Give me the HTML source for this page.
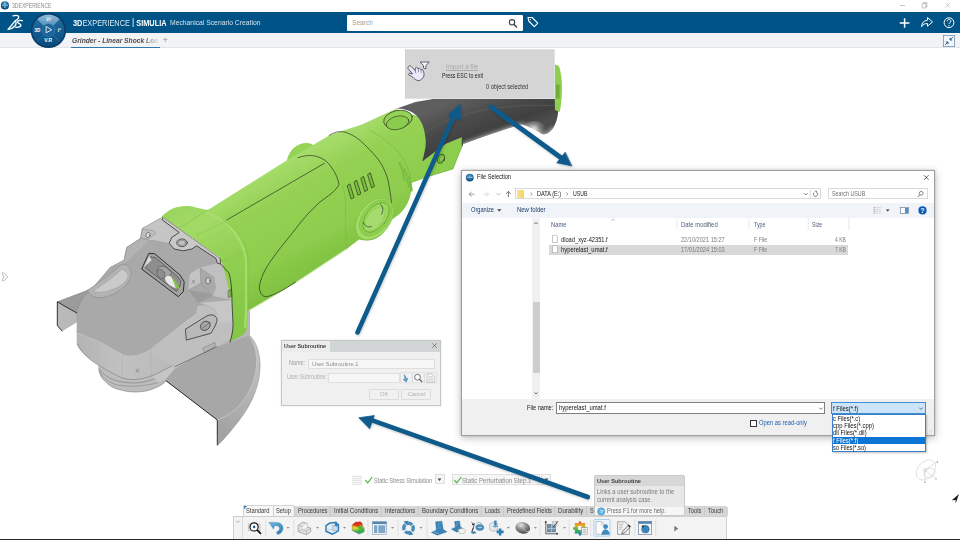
<!DOCTYPE html>
<html lang="en"><head>
<meta charset="utf-8">
<title>3DEXPERIENCE</title>
<style>
html,body{margin:0;padding:0;}
body{width:960px;height:540px;overflow:hidden;background:#fff;position:relative;font-family:"Liberation Sans","DejaVu Sans",sans-serif;color:#333;}
.abs{position:absolute;}
.t{position:absolute;white-space:nowrap;line-height:1;}
#titlebar{left:0;top:0;width:960px;height:11.500px;background:#fff;}
#bluebar{left:0;top:11.500px;width:960px;height:21.200px;background:#005386;}
#tabbar{left:0;top:32.700px;width:960px;height:15.600px;background:#f1f3f6;border-bottom:1px solid #e2e4e8;box-sizing:border-box;}
#bottomline{left:0;top:538.600px;width:960px;height:1.400px;background:#2a2a2a;}
</style>
</head>
<body>
<!-- window title bar -->
<div id="titlebar" class="abs"></div>
<div class="t" style="left: 11.6px; top: 3px; font-size: 6.5px; color: rgb(138, 138, 138); transform: scaleX(0.7866); transform-origin: 0px 0px;">3DEXPERIENCE</div>
<!-- blue bar -->
<div id="bluebar" class="abs"></div>
<div id="tabbar" class="abs"></div>

<!-- window icon -->
<svg class="abs" style="left:0;top:0" width="12" height="12" viewBox="0 0 12 12">
  <defs><radialGradient id="wi" cx="50%" cy="30%" r="65%"><stop offset="0" stop-color="#6fb1dc"></stop><stop offset="0.55" stop-color="#1f6ca3"></stop><stop offset="1" stop-color="#0a4372"></stop></radialGradient></defs>
  <circle cx="4.900" cy="5.400" r="4.100" fill="url(#wi)"></circle>
  <path d="M2.300 5.400h1.100M4.300 5.400h1.300M6.500 5.400h1.100M4.900 3.600v.8M4.900 6.400v1.600" stroke="#e8f3fb" stroke-width="0.800"></path>
</svg>
<!-- window controls -->
<svg class="abs" style="left:890px;top:0" width="70" height="12" viewBox="0 0 70 12">
  <path d="M10 5.5h5" stroke="#b5b5b5" stroke-width="0.8" fill="none"></path>
  <path d="M32.3 3.6h3.6v4.4h-3.6zM33.3 3.6v-1h3.6v4.4h-1" stroke="#aaa" stroke-width="0.7" fill="none"></path>
  <path d="M55.5 3l4.4 4.6M59.9 3l-4.4 4.6" stroke="#b5b5b5" stroke-width="0.7" fill="none"></path>
</svg>
<!-- DS logo -->
<svg class="abs" style="left:6px;top:13px" width="20" height="19" viewBox="0 0 20 19">
  <g fill="none" stroke="#fff" stroke-linecap="round" stroke-linejoin="round">
    <path d="M7 2.800C9.500 2.200 12 2.400 12.600 3.500C13.200 4.900 11.500 6.500 9.300 7.700" stroke-width="1.300"></path>
    <path d="M9.300 7.700L2 16.500C7 16 12 12 9.300 7.700Z" stroke-width="1.200" fill="#fff" fill-opacity="0.150"></path>
    <path d="M16.300 7.700C13.800 7 11.600 7.600 11.300 8.800C11 10.300 14.900 10.500 14.900 12.200C14.900 13.700 12.200 14.600 9.900 14.300" stroke-width="1.400"></path>
  </g>
</svg>
<!-- compass -->
<svg class="abs" style="left:29px;top:11px" width="40" height="40" viewBox="0 0 40 40">
  <defs>
    <linearGradient id="cg" x1="0" y1="0" x2="0" y2="1"><stop offset="0" stop-color="#2470a5"></stop><stop offset="0.55" stop-color="#125c91"></stop><stop offset="1" stop-color="#0a4b7c"></stop></linearGradient>
    <linearGradient id="cg2" x1="0" y1="0" x2="0" y2="1"><stop offset="0" stop-color="#8fbad8"></stop><stop offset="1" stop-color="#3f82b3"></stop></linearGradient>
  </defs>
  <circle cx="19.400" cy="19.400" r="17.700" fill="#083e69"></circle>
  <circle cx="19.400" cy="19.400" r="15.900" fill="url(#cg)"></circle>
  <path d="M19.400 19.400L8.300 8.300A15.700 15.700 0 0 1 30.500 8.300Z" fill="url(#cg2)"></path>
  <path d="M8.300 8.300L30.500 30.500M30.500 8.300L8.300 30.500" stroke="#5b93bb" stroke-width="0.500" opacity="0.750"></path>
  <circle cx="19.400" cy="19.200" r="6.500" fill="#1a6498" stroke="#4787b5" stroke-width="0.500"></circle>
  <path d="M17.100 15.400v6.400l5.600-3z" fill="none" stroke="#f0f6fb" stroke-width="0.900" stroke-linejoin="round"></path>
  <text x="19.600" y="10.400" font-size="4.800" font-weight="bold" fill="#f2f7fb" text-anchor="middle" font-family="Liberation Sans, sans-serif" font-style="italic">Vr</text>
  <text x="8.500" y="20.800" font-size="4.900" font-weight="bold" fill="#fff" text-anchor="middle" font-family="Liberation Sans, sans-serif" textLength="5.800" lengthAdjust="spacingAndGlyphs">3D</text>
  <text x="30.400" y="20.800" font-size="5.200" font-weight="bold" fill="#fff" text-anchor="middle" font-family="Liberation Sans, sans-serif">i²</text>
  <text x="19.200" y="31" font-size="5.300" font-weight="bold" fill="#fff" text-anchor="middle" font-family="Liberation Sans, sans-serif" textLength="7.800" lengthAdjust="spacingAndGlyphs">V.R</text>
</svg>
<div class="t" style="left: 72.5px; top: 17.6px; font-size: 8.3px; color: rgb(255, 255, 255); transform: scaleX(0.888); transform-origin: 0px 0px;"><b>3D</b><span style="color:#dbe8f2">EXPERIENCE</span> <span style="font-size:9.500px;position:relative;top:-0.300px;">|</span> <b>SIMULIA</b></div>
<div class="t" style="left: 169.5px; top: 19.2px; font-size: 7.2px; color: rgb(213, 228, 239); transform: scaleX(0.9438); transform-origin: 0px 0px;">Mechanical Scenario Creation</div>
<!-- tab -->
<div class="abs" style="left:72px;top:35px;width:87px;height:11px;overflow:hidden;-webkit-mask-image:linear-gradient(90deg,#000 82%,transparent 100%);mask-image:linear-gradient(90deg,#000 82%,transparent 100%);"><div class="t" style="left: 0px; top: 1.6px; font-size: 7.5px; font-weight: bold; font-style: italic; color: rgb(77, 77, 77); transform: scaleX(0.8932); transform-origin: 0px 0px;">Grinder - Linear Shock Loa</div></div>
<div class="abs" style="left:71px;top:46.500px;width:89px;height:1.600px;background:#2a78ad;"></div>
<div class="t" style="left:162.500px;top:35px;font-size:9.500px;color:#9a9a9a;">+</div>
<!-- search -->
<div class="abs" style="left:347px;top:15px;width:175.500px;height:15.500px;background:#fff;border-radius:1px;"></div>
<div class="t" style="left:352px;top:19.600px;font-size:6.600px;color:#a2a2a2;">Search</div>
<svg class="abs" style="left:507px;top:17px" width="12" height="12" viewBox="0 0 12 12"><circle cx="5" cy="5.300" r="2.700" fill="none" stroke="#444" stroke-width="1.100"></circle><path d="M7 7.400l2.600 2.700" stroke="#444" stroke-width="1.400" stroke-linecap="round"></path></svg>
<svg class="abs" style="left:526px;top:15px" width="14" height="14" viewBox="0 0 14 14"><path d="M2 2.500h4.200l5.600 5.600l-3.500 3.600l-5.600-5.700z" fill="none" stroke="#fff" stroke-width="1.100" stroke-linejoin="round"></path><circle cx="4.300" cy="4.600" r="0.700" fill="#fff"></circle></svg>
<!-- right icons -->
<svg class="abs" style="left:896px;top:14px" width="64" height="18" viewBox="0 0 64 18">
  <path d="M8.600 4.200v9.600M3.800 9h9.600" stroke="#fff" stroke-width="1.500" fill="none"></path>
  <path d="M31.500 3.600l5 4.300l-5 4.300v-2.600c-3-.2-4.700.8-5.900 3.100c.2-3.900 2.300-6.200 5.900-6.500z" fill="none" stroke="#fff" stroke-width="1" stroke-linejoin="round"></path>
  <circle cx="53" cy="8.700" r="4.900" fill="none" stroke="#fff" stroke-width="1"></circle>
  <path d="M51.200 7.300c0-1.100.8-1.800 1.800-1.800s1.800.7 1.800 1.600c0 1.400-1.800 1.400-1.800 2.900" fill="none" stroke="#fff" stroke-width="1"></path>
  <circle cx="53" cy="11.600" r="0.650" fill="#fff"></circle>
</svg>
<svg class="abs" style="left:943px;top:35px" width="12" height="12" viewBox="0 0 12 12">
  <rect x="0.350" y="0.350" width="11.300" height="11.300" fill="#f4f6f9" stroke="#5b86a8" stroke-width="0.700"></rect>
  <path d="M9.800 2.200L7 5M7 2.800v2.200h2.200M2.200 9.800L5 7M5 9.200V7H2.800" stroke="#1f5f8f" stroke-width="1" fill="none"></path>
</svg>
<!--TOPBAR-->
<!--GRINDER_START--><svg class="abs" style="left:0;top:0" width="960" height="540" viewBox="0 0 960 540">
<defs>
  <linearGradient id="gBody" gradientUnits="userSpaceOnUse" x1="270" y1="150" x2="330" y2="262">
    <stop offset="0" stop-color="#97d258"></stop><stop offset="0.14" stop-color="#a6dc6b"></stop><stop offset="0.36" stop-color="#95d254"></stop><stop offset="0.78" stop-color="#8dcc4c"></stop><stop offset="1" stop-color="#80c241"></stop>
  </linearGradient>
  <linearGradient id="gCollar" gradientUnits="userSpaceOnUse" x1="185" y1="205" x2="245" y2="330">
    <stop offset="0" stop-color="#9cd65e"></stop><stop offset="0.18" stop-color="#a3da67"></stop><stop offset="0.5" stop-color="#91cf50"></stop><stop offset="1" stop-color="#84c645"></stop>
  </linearGradient>
  <linearGradient id="gGrip" gradientUnits="userSpaceOnUse" x1="470" y1="95" x2="488" y2="142">
    <stop offset="0" stop-color="#5e5e5e"></stop><stop offset="0.450" stop-color="#4a4a4a"></stop><stop offset="0.800" stop-color="#404040"></stop><stop offset="1" stop-color="#4c4c4c"></stop>
  </linearGradient>
  <linearGradient id="gRim" gradientUnits="userSpaceOnUse" x1="215" y1="430" x2="262" y2="350">
    <stop offset="0" stop-color="#a2a2a2"></stop><stop offset="0.5" stop-color="#b4b4b4"></stop><stop offset="1" stop-color="#c2c2c2"></stop>
  </linearGradient>
  <linearGradient id="gSide" gradientUnits="userSpaceOnUse" x1="78" y1="350" x2="200" y2="350">
    <stop offset="0" stop-color="#b4b4b4"></stop><stop offset="0.35" stop-color="#c1c1c1"></stop><stop offset="1" stop-color="#b6b6b6"></stop>
  </linearGradient>
  <radialGradient id="gGlow" gradientUnits="userSpaceOnUse" cx="534" cy="129" r="13"><stop offset="0" stop-color="#fff" stop-opacity="0.850"></stop><stop offset="0.450" stop-color="#cfcfcf" stop-opacity="0.400"></stop><stop offset="1" stop-color="#888" stop-opacity="0"></stop></radialGradient>
  <clipPath id="gripClip"><path d="M395.500 109L415.500 102L433 99L460 96L560 96L559.700 99L558 113C557.500 118 556 124 552.600 129C549 133.500 545 135 542 134C537 131 533 128 529 127C526 125.500 523 124.500 520 124.500L506.300 129L484 136.500L463.300 144L462 137.200L445.600 143.900L439.600 148.300L421.900 161.700C423 158 424 156 424 154C425.500 149 426 144 425.600 139.400C425 132 423.500 126 421 121.700C418 116 413 112 408 110.500C404 109 400 108.500 395.500 109Z"></path></clipPath>
  <filter id="blur2" x="-10%" y="-50%" width="120%" height="200%"><feGaussianBlur stdDeviation="2.200"></feGaussianBlur></filter>
</defs>
<g stroke-linejoin="round" stroke-linecap="round">
<!-- guard: left plate -->
<path d="M57.300 301.800L91 289L110 300L77 322L62 331L57.300 325.500Z" fill="#9b9b9b"></path>
<path d="M57.300 301.800L76.700 313L76.700 322L62 331L57.300 325.500Z" fill="#b9b9b9"></path>
<path d="M57.300 301.800L91 289" fill="none" stroke="#777" stroke-width="0.500"></path>
<path d="M76.700 313L57.300 301.800V325.500L62 331" fill="none" stroke="#111" stroke-width="0.800"></path>
<!-- guard: right fan rim -->
<path d="M246.700 333C254 338 259 348 260 362C261 384 252 404 238 422C231 431 224 439 218 445L217.300 420Z" fill="url(#gRim)"></path>
<path d="M217.300 420V445" fill="none" stroke="#111" stroke-width="0.900"></path>
<path d="M218 445C224 439 231 431 238 422C252 404 261 384 260 362C259 348 254 338 246.700 333" fill="none" stroke="#8a8a8a" stroke-width="0.500"></path>
<!-- guard: flat face -->
<path d="M164.400 379.500L175 366L200 352L216.700 345L246.700 332C252 338 256 347 256.700 360C257 380 248 397 236 409C230 414 223 418 217.300 420Z" fill="#a7a7a7"></path>
<path d="M164.400 379.500L217.300 420" fill="none" stroke="#111" stroke-width="0.900"></path>
<path d="M217.300 420C223 418 230 414 236 409C248 397 257 380 256.700 360C256 347 252 338 246.700 333" fill="none" stroke="#c9c9c9" stroke-width="0.800"></path>
<!-- spindle flange -->
<path d="M98 362L98.700 370C100 376 103 380 105 381C109 386 115 389 121 390C126 391.500 131 392 136 392C143 392 150 390.500 155 388C160 386 164 383.500 166 381L166 362Z" fill="#bdbdbd"></path>
<path d="M98.700 368C103 375 110 379 117.500 381C123 382.500 130 383 136 383C144 382.500 151 380.500 157.500 377.500C165 374 171 370 176 366" fill="none" stroke="#6a6a6a" stroke-width="0.500"></path>
<path d="M100 372.500C104 379 110 383 117.500 385C123 386 130 386.500 137.500 386C147 385.500 157 383.500 165 380" fill="none" stroke="#7a7a7a" stroke-width="0.500"></path>
<path d="M98.700 370C100 376 103 380 105 381C109 386 115 389 121 390C126 391.500 131 392 136 392C143 392 150 390.500 155 388C160 386 164 383.500 166 381" fill="none" stroke="#6e6e6e" stroke-width="0.500"></path>
<!-- lower band between side face and guard -->
<path d="M150 372L177.800 360L216.700 342L250 331L250 335L216.700 346.700L200 354L175 368.500L165 380L158 383Z" fill="#c6c6c6"></path>
<!-- gear body side face (front rounded) -->
<path d="M76.700 322V344.400C80 351 88 359 99 365.500C108 371 115 375 122 377.800C128 380 134 380 140 379C146 378 151 376 155.500 374.400L177.800 363L216.700 346.700L250 335L250 300L200 300Z" fill="url(#gSide)"></path>
<path d="M77.800 344.400C80 351 88 359 99 365.500C108 371 115 375 122 377.800C128 380 134 380 140 379C146 378 151 376 155.500 374.400L177.800 363L200 351" fill="none" stroke="#6f6f6f" stroke-width="0.500"></path>
<path d="M97.800 341V364.500M122 354.400V377.500M151 349V376" fill="none" stroke="#a9a9a9" stroke-width="0.400"></path>
<!-- flange side region (light) -->
<path d="M190 274L200 266.700L220.800 264L230 275L233 300L233.300 321.700L230.800 338.300L216.700 346.700L175 366.700L150 352L175 330L196 314L198 303Z" fill="#bfbfbf"></path>
<!-- gear body top face -->
<path d="M90 291C84 295 79 302 77.800 309L76.700 333C82 335 90 338 97.800 341L122 354.400C128 357.500 138 357 150 350L175 330L196 314L198 303L180 298L141 269L126 262L110 267.500Z" fill="#a9a9a9"></path>
<path d="M76.700 333C82 335 90 338 97.800 341L122 354.400C128 357.500 138 357 150 350L175 330L196 314" fill="none" stroke="#c8c8c8" stroke-width="0.800"></path>
<!-- base silhouette of upper head -->
<path d="M160.800 218L142.500 228.300L140.800 238.300L126.700 247.500L124.200 260L110 267.500L139 272L178 301L197 306L233 302L230 275L220.800 264L220 258.300Z" fill="#a9a9a9"></path>
<!-- top strip light -->
<path d="M160.800 218L142.500 228.300L140.800 238.300L148.300 240L154 240L169.200 243.300L171.700 237.500L179.200 232.500L162.500 220Z" fill="#c5c5c5"></path>
<!-- wall front face -->
<path d="M140.800 238.300L126.700 247.500L124.200 260L110 267.500L126.500 262L146.700 242.500L148.300 240Z" fill="#b3b3b3"></path>
<path d="M142.500 228.300L140.800 238.300L126.700 247.500L124.200 260" fill="none" stroke="#9a9a9a" stroke-width="0.500"></path>
<path d="M140.800 238.300L148.300 240" fill="none" stroke="#9a9a9a" stroke-width="0.400"></path>
<path d="M160.800 218L142.500 228.300L140.800 238.300L126.700 247.500L124.200 260L110 267.500L90 291C84 295 79 302 77.800 309" fill="none" stroke="#858585" stroke-width="0.500"></path>
<!-- flange right of cube -->
<path d="M200 267.500L217.500 263.300L220.800 264L230 275L233 300L213 296L215.800 288.300L214 276.700Z" fill="#c0c0c0"></path>
<!-- dished pocket -->
<path d="M87.800 290C96 284.500 110 275 121 264.500C127 263 132 268 131 275.500C129 286 116 295 103 297.500C96 298.500 88.500 296 87.800 290Z" fill="#b3b3b3" stroke="#8a8a8a" stroke-width="0.600"></path>
<path d="M93 291C102 285.500 113 277.500 122 269C126 271 128.500 274 127.800 277.800C125 284 118 288 111 290C106 292 101 292.500 97.800 292C95 292 93.500 291.500 93 291Z" fill="#cacaca" stroke="#929292" stroke-width="0.400"></path>
<!-- window slot -->
<path d="M148.700 253.700L141.700 269L178.300 296.700L183.300 291.700L184.200 281.700L180 275L155 254Z" fill="#a2a2a2" stroke="#111" stroke-width="0.800"></path>
<path d="M150.500 257L145.500 268L176.500 291.500L180 286L181 281L177 276L156 258Z" fill="#8e8e8e" stroke="#333" stroke-width="0.500"></path>
<path d="M149 256L144 267.500L151.700 260Z" fill="#dcdcdc"></path>
<path d="M157 270C158 266 163 265 167 268L172 273L165 280Z" fill="#a3a3a3" stroke="#444" stroke-width="0.500"></path>
<ellipse cx="161" cy="274" rx="3.600" ry="5" fill="#8f8f8f" stroke="#444" stroke-width="0.400" transform="rotate(-30 161 274)"></ellipse>
<path d="M165 279C166 275 170 275 172 278L176 288C171 287 166 283 165 279Z" fill="#e8e8e8"></path>
<path d="M172 277C175 280 178 284 179.500 289L176 288C175 284 173 280 172 277Z" fill="#7fc93f"></path>
<!-- small ear -->
<path d="M142.500 229L154 230.800L155.800 233.300L148.300 239.500L141 238Z" fill="#bdbdbd" stroke="#777" stroke-width="0.400"></path>
<ellipse cx="148" cy="235" rx="1.900" ry="2.700" fill="#dedede" stroke="#333" stroke-width="0.500" transform="rotate(20 148 235)"></ellipse>
<!-- cube boss -->
<path d="M190 274L200 267.500L214 276.700L215.800 288.300L210 293.300L200.800 283.300L188.300 290Z" fill="#b6b6b6"></path>
<path d="M190 274L200 267.500L200.800 283.300L188.300 290Z" fill="#c4c4c4"></path>
<path d="M200 267.500L214 276.700L215.800 288.300L210 293.300L200.800 283.300Z" fill="#a9a9a9"></path>
<path d="M200 267.500L200.800 283.300L188.300 290M200.800 283.300L210 293.300" fill="none" stroke="#909090" stroke-width="0.500"></path>
<path d="M188.300 290L198 303L213 296L210 293.300" fill="#9c9c9c"></path>
<ellipse cx="208" cy="280.800" rx="2.200" ry="3.200" fill="#d4d4d4" stroke="#222" stroke-width="0.500"></ellipse>
<path d="M192 280l3 3.400M195 280l-3 3.400" stroke="#444" stroke-width="0.400" fill="none"></path>
<path d="M198 303C206 304 213 307 216.700 313L217.500 323L233.300 321.700L233 300Z" fill="#c6c6c6"></path>
<path d="M198 303C206 304 213 307 216.700 313" fill="none" stroke="#a0a0a0" stroke-width="0.400"></path>
<!-- lever ear -->
<path d="M185.800 329L206.700 316C210 314.500 213 314.500 215 316C217 317.500 217.500 320 216.700 321.700C215.500 326 213 330 210.800 333.300L186.700 340Z" fill="#b9b9b9" stroke="#222" stroke-width="0.700"></path>
<ellipse cx="205.300" cy="325.800" rx="5.300" ry="4.200" fill="#a6a6a6" stroke="#222" stroke-width="0.600" transform="rotate(-35 205.300 325.800)"></ellipse>
<path d="M202.500 328L208.500 323.500" stroke="#444" stroke-width="0.500"></path>
<path d="M203 348L215 342.500L215 347L205 353Z" fill="#b2b2b2" stroke="#666" stroke-width="0.400"></path>
<path d="M175 366.700L216.700 346.700" fill="none" stroke="#333" stroke-width="0.500"></path>
<path d="M136 369l3 3.400M139 369l-3 3.400" stroke="#444" stroke-width="0.400" fill="none"></path>
<!-- far side boss bump on body -->
<path d="M287 160C289 150 297 143 307 143C312 143 315 146 315 150L300 166Z" fill="#94d354"></path>
<!-- green main body -->
<path d="M207.800 210L291 157.800L331 134.400L362 124.400L395.500 109L424 118L430 150L421 162L427.800 176.700L411 183C412.500 194 408.500 206 399 214.400L392.600 219L384 232C378 240 368 242 359 239.600L346.700 249L293 284.400L262 303L247.800 311L232 300Z" fill="url(#gBody)"></path>
<!-- rear tab -->
<path d="M421 162L436 147L445.600 143.900L462 137.200L462.600 145.400L458.900 154L453 169L427.800 176.700L411 183Z" fill="#8dcd4d"></path>
<path d="M462.600 145.400L458.900 154L453 169L427.800 176.700" fill="none" stroke="#5c9d2b" stroke-width="0.500"></path>
<path d="M462.300 137.200V145.400" stroke="#222" stroke-width="1"></path>
<ellipse cx="441" cy="158.700" rx="3.400" ry="4.800" fill="#86c746" stroke="#1a1a1a" stroke-width="0.600" transform="rotate(25 441 158.700)"></ellipse>
<ellipse cx="441.800" cy="158.300" rx="2.200" ry="3.600" fill="none" stroke="#3a6e18" stroke-width="0.400" transform="rotate(25 441.800 158.300)"></ellipse>
<!-- green collar -->
<path d="M161 217.300C166 212 172 208 177.800 207C185 205.500 192 206 196.700 207.800L207.800 210L223 220C232 226 238 232 241 238C245 245 247 251 247.800 257.800V311L246.700 329C245 333 243 335 241 336L230 342C232 336 233 330 233 324.400L232 302C232 290 231 280 229 273L221 262L219 256.700Z" fill="url(#gCollar)"></path>
<path d="M220.800 264L229 273C231 280 232 290 232 302L233 324.400C233 330 232 336 230 342" fill="none" stroke="#1d1d1d" stroke-width="0.700"></path>
<path d="M206 212.500C216 216 224 220 231 228C239 237 245 248 246.200 262V311L245.200 327" fill="none" stroke="#a9de71" stroke-width="2.600" opacity="0.850"></path>
<path d="M196.700 235L225 221.700M220.800 261.700L245.800 251.700M232.500 301L246.500 294" fill="none" stroke="#7fc043" stroke-width="0.400"></path>
<path d="M248.500 310.500L293 284L346.700 248.600" fill="none" stroke="#b9e388" stroke-width="0.900"></path>

<path d="M177.800 229L207.800 210M223 220C232 226 238 232 241 238C245 245 247 251 247.800 257.800V311" fill="none" stroke="#7bbb3c" stroke-width="0.500"></path>

<path d="M228.500 290.500l2.500 -1v7l-2.500 1z" fill="#7ec23f" stroke="#222" stroke-width="0.400"></path>
<!-- lug plate -->
<path d="M163.300 217.500L220 258.300L220.800 264L217.500 263.300L215.800 258.300L196.700 245.800L191.700 249L183.300 250.800L174.200 249L169.200 243.300L171.700 237.500L179.200 232.500L162.500 220Z" fill="#c9c9c9" stroke="#1a1a1a" stroke-width="0.700"></path>
<path d="M163.300 217.500L220 258.300" fill="none" stroke="#e2e2e2" stroke-width="0.600"></path>
<ellipse cx="182" cy="242.800" rx="5.300" ry="3.900" fill="#b3b3b3" stroke="#1a1a1a" stroke-width="0.600"></ellipse>
<ellipse cx="182" cy="242.800" rx="3.600" ry="2.600" fill="#c2c2c2" stroke="#555" stroke-width="0.400"></ellipse>
<!-- body seams -->
<path d="M226.700 220L324.400 163.300" fill="none" stroke="#1a1a1a" stroke-width="0.600"></path>
<path d="M297.800 157.800C305 155 312 155 317.800 156.700C324 159 328 162 331 166.700C335 172 338 178 339 184.400C336 191 328 196 320 202C311 210 303 219 295.500 229C287 240 279 249 273 257.800C267 266 263 273 261 280C259 286 259 289 260 291C261 295 264 297 266.700 296.700C275 295 285 289 295.500 282" fill="none" stroke="#1a1a1a" stroke-width="0.600"></path>
<path d="M329 135.500C334 132 339 131 344.400 132C352 134 359 139 364.400 144.400C371 151 376 156 380 162C385 170 388 178 389 185.500C391 196 392 206 392 215" fill="none" stroke="#1a1a1a" stroke-width="0.600"></path>
<path d="M343 186.700C345 194 346 202 345.500 209C345 222 346 236 346.700 249" fill="none" stroke="#76b83a" stroke-width="0.500"></path>
<path d="M369 130C380 135 390 143 398 152C405 160 409 169 411 179" fill="none" stroke="#6fb234" stroke-width="0.500"></path>
<!-- vents -->
<g fill="#79bd3d" stroke="#1a1a1a" stroke-width="0.600">
<path d="M347.500 185.500l2.400 -1.600l4.200 13.500l-2.600 1.400z"></path><path d="M354.300 181.800l2.400 -1.600l4.200 13.500l-2.600 1.400z"></path><path d="M361.100 178.100l2.400 -1.600l4.200 13.500l-2.600 1.400z"></path><path d="M367.900 174.400l2.400 -1.600l4.200 13.500l-2.600 1.400z"></path>
</g>
<g fill="none" stroke="#6fb135" stroke-width="2" stroke-linecap="round">
<path d="M399.500 163C402.500 168 404 174 404.500 180"></path><path d="M404.500 169.500C407 174 408.500 180 408.800 186"></path><path d="M408.600 177.500C410.500 181.500 411.500 186 411.600 190.500"></path>
</g>
<g fill="none" stroke="#8fd050" stroke-width="0.800" stroke-linecap="round">
<path d="M399.900 163.500C402.900 168.500 404.400 174.500 404.900 180"></path><path d="M404.900 170C407.400 174.500 408.900 180.500 409.200 186"></path><path d="M409 178C410.900 182 411.900 186.500 412 190.500"></path>
</g>
<!-- side boss ring -->
<ellipse cx="374.500" cy="219" rx="15.500" ry="23.500" fill="#a3db6a" stroke="#7fc040" stroke-width="0.600" transform="rotate(38 374.500 219)"></ellipse>
<ellipse cx="375.600" cy="218" rx="13" ry="20.500" fill="#8fcf4f" stroke="#79bb3b" stroke-width="0.500" transform="rotate(38 375.600 218)"></ellipse>
<ellipse cx="376" cy="217.500" rx="10" ry="17" fill="#9bd65d" stroke="#4f8e23" stroke-width="0.500" transform="rotate(38 376 217.500)"></ellipse>
<ellipse cx="374.800" cy="219" rx="7.500" ry="14" fill="#a6dc6f" stroke="#86c648" stroke-width="0.500" transform="rotate(38 374.800 219)"></ellipse>
<path d="M380.500 204.500C383.500 207 383.500 211 381.500 214.500" fill="none" stroke="#1a1a1a" stroke-width="0.600"></path>
<path d="M363.500 222.500C365 226.500 368 228 371.500 226.500" fill="none" stroke="#1a1a1a" stroke-width="0.600"></path>
<!-- top hole near grip -->
<ellipse cx="398" cy="119.500" rx="14.500" ry="9" fill="#95d356" stroke="#1a1a1a" stroke-width="0.600" transform="rotate(-12 398 119.500)"></ellipse>
<ellipse cx="397.600" cy="122.800" rx="11.500" ry="6.600" fill="#8ccc4c" stroke="#1a1a1a" stroke-width="0.500" transform="rotate(-14 397.600 122.800)"></ellipse>
<!-- dark grip -->
<path d="M395.500 109L415.500 102L433 99L460 96L560 96L559.700 99L558 113C557.500 118 556 124 552.600 129C549 133.500 545 135 542 134C537 131 533 128 529 127C526 125.500 523 124.500 520 124.500L506.300 129L484 136.500L463.300 144L462 137.200L445.600 143.900L439.600 148.300L421.900 161.700C423 158 424 156 424 154C425.500 149 426 144 425.600 139.400C425 132 423.500 126 421 121.700C418 116 413 112 408 110.500C404 109 400 108.500 395.500 109Z" fill="url(#gGrip)"></path>
<path d="M424.400 134.400C430 128 445 120 470 113C500 106 530 104 557 106" fill="none" stroke="#686868" stroke-width="0.800" opacity="0.600"></path>
<g clip-path="url(#gripClip)"><path d="M463.300 145.500L484 138L506.300 130.500L520 126C526 126 533 130 542 136C546 136.500 550 134 553 130" fill="none" stroke="#fff" stroke-width="5" opacity="0.550" filter="url(#blur2)"></path><ellipse cx="534" cy="130" rx="13" ry="9" fill="url(#gGlow)"></ellipse></g>
<!-- green end cap -->
<path d="M554 64L559 66C561 72 562 80 562 88C562 98 561 106 559.700 112L555 110Z" fill="#8fce4e"></path>
<path d="M556 84l3.500 1v14l-3.500 -1z" fill="#6fae36"></path>
</g>
</svg>
<!--GRINDER_END-->
<!--CANVAS-->
<!-- left handle -->
<svg class="abs" style="left:1px;top:271px" width="9" height="12" viewBox="0 0 9 12"><path d="M1.200 2H3.200L6.800 6L3.200 9.800H1.200L2.600 6Z" fill="#fff" stroke="#a6a6a6" stroke-width="0.700" stroke-linejoin="round"></path></svg>
<!-- import panel -->
<div class="abs" style="left:405px;top:49px;width:149.500px;height:49.500px;background:#d5d5d5;box-sizing:border-box;border:1px solid #dfe3e6;border-left-color:#d0d0d0;"></div>
<svg class="abs" style="left:406px;top:59px" width="26" height="24" viewBox="0 0 26 24">
  <path d="M14.200 3h9l-3.300 3.600v3.200l-2.400 -.8v-2.400z" fill="#f6f6fc" stroke="#2a2a3a" stroke-width="0.700" stroke-linejoin="round"></path>
  <path d="M2.400 7.600c.7-1 2-.9 2.800-.1l4 4.100l.2-2.300c.1-1 1.400-1.400 2-.5l.8 1.200c.3-.8 1.400-1 2-.3l.8 1.100c.5-.6 1.500-.5 1.900.3c1.200 2.200 1.400 4.500.7 6.900l-3.600 3.600c-2.500.1-4.500-.6-5.900-2.100c-1.500-1.700-3.300-2.800-5.200-3.400c-.7-1 .1-2 1.200-1.800l2.500.7l-4.300-5.300c-.5-.7-.5-1.500.1-2.100z" fill="#ebe9fb" stroke="#2a2a3a" stroke-width="0.700" stroke-linejoin="round"></path>
  <path d="M9.200 11.600l.6 2.600M12.200 10l.5 3.200M15 10.800l.3 3" fill="none" stroke="#2a2a3a" stroke-width="0.500"></path>
</svg>
<div class="t" style="left: 445.8px; top: 64.3px; font-size: 6.6px; color: rgb(169, 169, 169); text-decoration: underline; transform: scaleX(0.9346); transform-origin: 0px 0px;">Import a file</div>
<div class="t" style="left: 441.7px; top: 72.8px; font-size: 6.3px; color: rgb(31, 31, 31); transform: scaleX(0.8309); transform-origin: 0px 0px;">Press ESC to exit</div>
<div class="t" style="left: 485.8px; top: 84.4px; font-size: 6.5px; color: rgb(51, 51, 51); transform: scaleX(0.8648); transform-origin: 0px 0px;">0 object selected</div>
<!-- user subroutine dialog -->
<div class="abs" style="left:281px;top:340px;width:160px;height:65.500px;background:#f0f0f0;box-sizing:border-box;border:1px solid #c6c6c6;box-shadow:0 0 2px rgba(0,0,0,0.120);"></div>
<div class="abs" style="left:282px;top:341px;width:158px;height:11px;background:#d2d5d6;"></div>
<div class="abs" style="left:282px;top:341px;width:47.500px;height:11px;background:#ececec;"></div>
<div class="t" style="left: 284px; top: 342.7px; font-size: 6.1px; color: rgb(63, 63, 63); font-weight: bold; transform: scaleX(0.886); transform-origin: 0px 0px;">User Subroutine</div>
<svg class="abs" style="left:431px;top:342px" width="8" height="8" viewBox="0 0 8 8"><path d="M1.300 1.300l4.600 4.600M5.900 1.300l-4.600 4.600" stroke="#707070" stroke-width="0.800"></path></svg>
<div class="t" style="left: 288.7px; top: 360.3px; font-size: 6.3px; color: rgb(160, 160, 160); transform: scaleX(0.8627); transform-origin: 0px 0px;">Name:</div>
<div class="abs" style="left:308.400px;top:358.500px;width:126.200px;height:10.500px;background:#f6f6f6;box-sizing:border-box;border:1px solid #dedede;border-radius:1px;"></div>
<div class="t" style="left: 311.6px; top: 360.9px; font-size: 6.2px; color: rgb(140, 140, 140); transform: scaleX(0.9323); transform-origin: 0px 0px;">User Subroutine.1</div>
<div class="t" style="left: 286.9px; top: 373.7px; font-size: 6.3px; color: rgb(176, 176, 176); transform: scaleX(0.8463); transform-origin: 0px 0px;">User Subroutine:</div>
<div class="abs" style="left:328.100px;top:372.700px;width:72px;height:10.500px;background:#f6f6f6;box-sizing:border-box;border:1px solid #dedede;border-radius:1px;"></div>
<svg class="abs" style="left:400px;top:372px" width="38" height="12" viewBox="0 0 38 12">
  <g fill="#f3f3f3" stroke="#d4d4d4" stroke-width="0.600"><rect x="0.500" y="0.900" width="11.500" height="10"></rect><rect x="12.600" y="0.900" width="11.500" height="10"></rect><rect x="24.800" y="0.900" width="11.500" height="10"></rect></g>
  <path d="M4 2.500c1.500 1 2.200 2.500 2.200 4.200l1.800-.6l-1.600 4l-3.400-2.400l1.700-.4c0-1.800-.3-3.300-.7-4.800z" fill="#5e9fc9" stroke="#3c7fae" stroke-width="0.400"></path>
  <circle cx="17.500" cy="5.200" r="2.900" fill="#fbfbfb" stroke="#555" stroke-width="0.800"></circle><path d="M19.600 7.400l2.600 2.600" stroke="#555" stroke-width="1.100"></path>
  <path d="M27 2h5l2.300 2.300v6h-7.300z" fill="#fafafa" stroke="#9a9a9a" stroke-width="0.500"></path><path d="M28.200 4.600h4.800M28.200 6h4.800M28.200 7.400h4.800M28.200 8.800h4.800" stroke="#b5b5b5" stroke-width="0.500"></path>
</svg>
<div class="abs" style="left:369.400px;top:388.500px;width:29.400px;height:11px;background:#f1f1f1;box-sizing:border-box;border:1px solid #dcdcdc;border-radius:1px;"></div>
<div class="t" style="left: 379.8px; top: 391px; font-size: 6.2px; color: rgb(176, 176, 176); transform: scaleX(0.9494); transform-origin: 0px 0px;">OK</div>
<div class="abs" style="left:401.200px;top:388.500px;width:30px;height:11px;background:#f1f1f1;box-sizing:border-box;border:1px solid #dcdcdc;border-radius:1px;"></div>
<div class="t" style="left: 407.5px; top: 391px; font-size: 6.2px; color: rgb(176, 176, 176); transform: scaleX(0.9084); transform-origin: 0px 0px;">Cancel</div>

<!--PANELS-->
<!-- file selection dialog -->
<div class="abs" style="left:461px;top:170px;width:473.500px;height:266px;background:#fff;box-sizing:border-box;border:1px solid #9f9f9f;box-shadow:0 2px 8px rgba(0,0,0,0.260), 0 0 2px rgba(0,0,0,0.180);"></div>
<svg class="abs" style="left:465px;top:173px" width="10" height="10" viewBox="0 0 10 10">
  <defs><radialGradient id="wi2" cx="50%" cy="35%" r="60%"><stop offset="0" stop-color="#5aa3d4"></stop><stop offset="1" stop-color="#0a4a7c"></stop></radialGradient></defs>
  <circle cx="4.800" cy="4.600" r="3.900" fill="url(#wi2)"></circle><path d="M2.200 4.300h1.200M4.200 4.300h1.300M6.300 4.300h1.200" stroke="#e6f2fb" stroke-width="0.900"></path>
</svg>
<div class="t" style="left: 476.7px; top: 174.4px; font-size: 6.6px; color: rgb(21, 21, 21); transform: scaleX(0.8587); transform-origin: 0px 0px;">File Selection</div>
<svg class="abs" style="left:922px;top:173px" width="9" height="9" viewBox="0 0 9 9"><path d="M2 2.200l4.600 4.600M6.600 2.200l-4.600 4.600" stroke="#222" stroke-width="0.700"></path></svg>
<!-- nav row -->
<svg class="abs" style="left:466px;top:188px" width="50" height="12" viewBox="0 0 50 12">
  <g fill="none" stroke-linecap="round" stroke-linejoin="round">
  <path d="M8.200 6.200H3.300M5.500 3.900L3.200 6.200L5.500 8.500" stroke="#8a8a8a" stroke-width="0.800"></path>
  <path d="M17.500 6.200H22.400M20.200 3.900L22.500 6.200L20.200 8.500" stroke="#d5d5d5" stroke-width="0.800"></path>
  <path d="M31 5.600l1.500 1.500l1.500-1.500" stroke="#9a9a9a" stroke-width="0.700"></path>
  <path d="M42.400 8.800V3.600M40.200 5.700L42.400 3.500L44.600 5.700" stroke="#555" stroke-width="0.800"></path>
  </g>
</svg>
<div class="abs" style="left:515.300px;top:188.300px;width:305.500px;height:11px;background:#fff;box-sizing:border-box;border:1px solid #d9d9d9;"></div>
<div class="abs" style="left:517px;top:189.600px;width:6.700px;height:8.400px;background:linear-gradient(90deg,#f9e08a,#f5d469);border-radius:0.500px;"></div>
<svg class="abs" style="left:528px;top:190px" width="46" height="8" viewBox="0 0 46 8"><path d="M2.600 2.300l1.600 1.700l-1.600 1.700M38.300 2.300l1.600 1.700l-1.600 1.700" fill="none" stroke="#666" stroke-width="0.600"></path></svg>
<div class="t" style="left: 536.7px; top: 190.6px; font-size: 6.3px; color: rgb(34, 34, 34); transform: scaleX(0.883); transform-origin: 0px 0px;">DATA (E:)</div>
<div class="t" style="left: 572.8px; top: 190.6px; font-size: 6.3px; color: rgb(34, 34, 34); transform: scaleX(0.8229); transform-origin: 0px 0px;">USUB</div>
<svg class="abs" style="left:801px;top:189px" width="20" height="10" viewBox="0 0 20 10">
  <path d="M3.200 4.200l1.700 1.700l1.700-1.700" fill="none" stroke="#555" stroke-width="0.800"></path>
  <path d="M9.400 0.500v9" stroke="#d9d9d9" stroke-width="0.800"></path>
  <path d="M13 3.600a2.200 2.200 0 1 0 3 0" fill="none" stroke="#555" stroke-width="0.700"></path><path d="M13.800 2.200h1.800v1.700" fill="none" stroke="#555" stroke-width="0.700"></path>
</svg>
<div class="abs" style="left:827.500px;top:188.300px;width:100px;height:11px;background:#fff;box-sizing:border-box;border:1px solid #d9d9d9;"></div>
<div class="t" style="left: 831.7px; top: 190.6px; font-size: 6.3px; color: rgb(111, 111, 111); transform: scaleX(0.8494); transform-origin: 0px 0px;">Search USUB</div>
<svg class="abs" style="left:916px;top:190px" width="9" height="9" viewBox="0 0 9 9"><circle cx="5.200" cy="3.300" r="1.900" fill="none" stroke="#555" stroke-width="0.700"></circle><path d="M3.800 4.800L1.800 6.900" stroke="#555" stroke-width="0.900"></path></svg>
<!-- toolbar row -->
<div class="abs" style="left:462px;top:203px;width:471.500px;height:14.700px;background:#f0f3f8;"></div>
<div class="t" style="left: 471.2px; top: 206.8px; font-size: 6.4px; color: rgb(28, 62, 108); transform: scaleX(0.8867); transform-origin: 0px 0px;">Organize</div>
<svg class="abs" style="left:496px;top:208px" width="7" height="5" viewBox="0 0 7 5"><path d="M1.200 1.200h4.200l-2.100 2.400z" fill="#333"></path></svg>
<div class="t" style="left: 517px; top: 206.8px; font-size: 6.4px; color: rgb(28, 62, 108); transform: scaleX(0.933); transform-origin: 0px 0px;">New folder</div>
<svg class="abs" style="left:870px;top:204px" width="62" height="13" viewBox="0 0 62 13">
  <path d="M3.600 3.600h1.600M3.600 5.400h1.600M3.600 7.200h1.600M3.600 9h1.600" stroke="#9a9a9a" stroke-width="0.900"></path>
  <path d="M6.600 3.600h1.400M9.200 3.600h1.400M6.600 5.400h1.400M9.200 5.400h1.400M6.600 7.200h1.400M9.200 7.200h1.400M6.600 9h1.400M9.200 9h1.400" stroke="#b5b5b5" stroke-width="0.700"></path>
  <path d="M15.800 5.400h3.800l-1.900 2.200z" fill="#333"></path>
  <rect x="30.300" y="3.600" width="8.200" height="5.800" fill="#fff" stroke="#6d7f96" stroke-width="0.700"></rect><rect x="35" y="4" width="3.200" height="5" fill="#4b8ed0"></rect>
  <circle cx="52.500" cy="6.400" r="4.100" fill="#0b5cb0"></circle>
  <text x="52.500" y="8.700" font-size="6.400" font-weight="bold" fill="#fff" text-anchor="middle" font-family="Liberation Sans, sans-serif">?</text>
</svg>
<!-- scroll column -->
<div class="abs" style="left:532.300px;top:217.700px;width:7.700px;height:181px;background:#f0f0f0;"></div>
<div class="abs" style="left:533px;top:302.200px;width:7px;height:70.700px;background:#cdcdcd;"></div>
<svg class="abs" style="left:532px;top:218px" width="8" height="182" viewBox="0 0 8 182"><path d="M2.500 6l1.500-1.600l1.500 1.600M2.500 174.400l1.500 1.600l1.500-1.600" fill="none" stroke="#444" stroke-width="0.800"></path></svg>
<!-- headers -->
<svg class="abs" style="left:540px;top:217px" width="320" height="18" viewBox="0 0 320 18">
  <path d="M137 1v12M209 1v12M268.300 1v12M308.800 1v12" stroke="#e5e5e5" stroke-width="0.800"></path>
  <path d="M71.500 3.600l1.700-1.600l1.700 1.600" fill="none" stroke="#8a8a8a" stroke-width="0.600"></path>
</svg>
<div class="t" style="left: 550.8px; top: 221.8px; font-size: 6.3px; color: rgb(76, 96, 122); transform: scaleX(0.9228); transform-origin: 0px 0px;">Name</div>
<div class="t" style="left: 681.2px; top: 221.8px; font-size: 6.3px; color: rgb(76, 96, 122); transform: scaleX(0.9444); transform-origin: 0px 0px;">Date modified</div>
<div class="t" style="left: 753.5px; top: 221.8px; font-size: 6.3px; color: rgb(76, 96, 122); transform: scaleX(0.8421); transform-origin: 0px 0px;">Type</div>
<div class="t" style="left: 812.4px; top: 221.8px; font-size: 6.3px; color: rgb(76, 96, 122); transform: scaleX(0.8327); transform-origin: 0px 0px;">Size</div>
<!-- rows -->
<div class="abs" style="left:549.200px;top:244.700px;width:298.500px;height:10.300px;background:#d9d9d9;"></div>
<svg class="abs" style="left:551px;top:234px" width="8" height="22" viewBox="0 0 8 22">
  <path d="M1.500 1.300h3.600l1.400 1.400v5.800h-5z" fill="#fff" stroke="#8e8e8e" stroke-width="0.500"></path>
  <path d="M1.500 11.500h3.600l1.400 1.400v5.800h-5z" fill="#fff" stroke="#8e8e8e" stroke-width="0.500"></path>
</svg>
<div class="t" style="left: 560.8px; top: 237.2px; font-size: 6.4px; color: rgb(26, 26, 26); transform: scaleX(0.894); transform-origin: 0px 0px;">dload_xyz-42351.f</div>
<div class="t" style="left: 560.8px; top: 247.2px; font-size: 6.4px; color: rgb(26, 26, 26); transform: scaleX(0.9191); transform-origin: 0px 0px;">hyperelast_umat.f</div>
<div class="t" style="left: 681.2px; top: 237.2px; font-size: 6.4px; color: rgb(122, 122, 122); transform: scaleX(0.8781); transform-origin: 0px 0px;">22/10/2021 15:27</div>
<div class="t" style="left: 681.2px; top: 247.2px; font-size: 6.4px; color: rgb(122, 122, 122); transform: scaleX(0.8781); transform-origin: 0px 0px;">17/01/2024 15:03</div>
<div class="t" style="left: 753.5px; top: 237.2px; font-size: 6.4px; color: rgb(122, 122, 122); transform: scaleX(0.8196); transform-origin: 0px 0px;">F File</div>
<div class="t" style="left: 753.5px; top: 247.2px; font-size: 6.4px; color: rgb(122, 122, 122); transform: scaleX(0.8196); transform-origin: 0px 0px;">F File</div>
<div class="t" style="left: 834.5px; top: 237.2px; font-size: 6.4px; color: rgb(122, 122, 122); transform: scaleX(0.7793); transform-origin: 0px 0px;">4 KB</div>
<div class="t" style="left: 834.5px; top: 247.2px; font-size: 6.4px; color: rgb(122, 122, 122); transform: scaleX(0.7793); transform-origin: 0px 0px;">7 KB</div>
<!-- bottom area -->
<div class="abs" style="left:462px;top:398.700px;width:471.500px;height:36.300px;background:#f0f0f0;"></div>
<div class="t" style="left: 527px; top: 405.4px; font-size: 6.5px; color: rgb(21, 21, 21); transform: scaleX(0.8663); transform-origin: 0px 0px;">File name:</div>
<div class="abs" style="left:556.200px;top:402.400px;width:269.300px;height:12.100px;background:#fff;box-sizing:border-box;border:1px solid #7f7f7f;"></div>
<div class="t" style="left: 558.7px; top: 405.4px; font-size: 6.5px; color: rgb(17, 17, 17); transform: scaleX(0.9057); transform-origin: 0px 0px;">hyperelast_umat.f</div>
<svg class="abs" style="left:817px;top:405px" width="8" height="7" viewBox="0 0 8 7"><path d="M2.200 2.700l1.700 1.700l1.700-1.700" fill="none" stroke="#444" stroke-width="0.700"></path></svg>
<div class="abs" style="left:831px;top:402.400px;width:94.500px;height:12.100px;background:#cce4f7;box-sizing:border-box;border:1px solid #3f8fd6;"></div>
<div class="t" style="left: 833.1px; top: 405.5px; font-size: 6.5px; color: rgb(17, 17, 17); transform: scaleX(0.9061); transform-origin: 0px 0px;">f Files(*.f)</div>
<svg class="abs" style="left:917px;top:405px" width="8" height="7" viewBox="0 0 8 7"><path d="M2.200 2.700l1.700 1.700l1.700-1.700" fill="none" stroke="#444" stroke-width="0.700"></path></svg>
<div class="abs" style="left:750.400px;top:420px;width:6.600px;height:6.600px;background:#fff;box-sizing:border-box;border:0.600px solid #333;"></div>
<div class="t" style="left: 759.2px; top: 420.2px; font-size: 6.4px; color: rgb(26, 95, 180); transform: scaleX(0.9091); transform-origin: 0px 0px;">Open as read-only</div>
<svg class="abs" style="left:926px;top:428px" width="7" height="7" viewBox="0 0 7 7"><path d="M5.500 1.500v.1M5.500 3.500v.1M3.500 3.500v.1M5.500 5.500v.1M3.500 5.500v.1M1.500 5.500v.1" stroke="#c6c6c6" stroke-width="0.700" stroke-linecap="square"></path></svg>
<!-- dropdown list -->
<div class="abs" style="left:831.500px;top:413.800px;width:94.300px;height:38.600px;background:#fff;box-sizing:border-box;border:1px solid #3b7fc4;box-shadow:1px 1px 2px rgba(0,0,0,0.250);"></div>
<div class="abs" style="left:832.500px;top:437.200px;width:92.300px;height:6.800px;background:#0b74d4;"></div>
<div class="t" style="left: 833.1px; top: 415.6px; font-size: 6.3px; color: rgb(17, 17, 17); transform: scaleX(0.9109); transform-origin: 0px 0px;">c Files(*.c)</div>
<div class="t" style="left: 833.1px; top: 422.9px; font-size: 6.3px; color: rgb(17, 17, 17); transform: scaleX(0.9349); transform-origin: 0px 0px;">cpp Files(*.cpp)</div>
<div class="t" style="left: 833.1px; top: 430.2px; font-size: 6.3px; color: rgb(17, 17, 17); transform: scaleX(0.9321); transform-origin: 0px 0px;">dll Files(*.dll)</div>
<div class="t" style="left: 833.1px; top: 437.6px; font-size: 6.3px; color: rgb(255, 255, 255); transform: scaleX(0.9355); transform-origin: 0px 0px;">f Files(*.f)</div>
<div class="t" style="left: 833.1px; top: 445.2px; font-size: 6.3px; color: rgb(17, 17, 17); transform: scaleX(0.8952); transform-origin: 0px 0px;">so Files(*.so)</div>

<!--DIALOG-->
<!-- simulation status -->
<svg class="abs" style="left:351px;top:474px" width="12" height="12" viewBox="0 0 12 12"><path d="M1 2.300h10M1 4.300h10M1 6.300h10M1 8.300h10M1 10.300h10" stroke="#cfcfcf" stroke-width="0.700"></path></svg>
<svg class="abs" style="left:363.500px;top:475px" width="10" height="10" viewBox="0 0 10 10"><path d="M1.300 5.200l2.400 2.600l4.600-5.800" fill="none" stroke="#4fb04a" stroke-width="1.200"></path></svg>
<div class="t" style="left: 373.6px; top: 477.6px; font-size: 6.4px; color: rgb(138, 138, 138); transform: scaleX(0.8595); transform-origin: 0px 0px;">Static Stress Simulation</div>
<div class="abs" style="left:434.800px;top:474px;width:10px;height:10.400px;background:#f5f5f5;box-sizing:border-box;border:1px solid #dedede;"></div>
<svg class="abs" style="left:436.300px;top:476.500px" width="7" height="6" viewBox="0 0 7 6"><path d="M1.600 1.600h3.800l-1.900 2.400z" fill="#444"></path></svg>
<div class="abs" style="left:452.200px;top:474px;width:87.600px;height:10.800px;background:#f6f6f6;box-sizing:border-box;border:1px solid #dfdfdf;"></div>
<svg class="abs" style="left:453px;top:475px" width="10" height="10" viewBox="0 0 10 10"><path d="M1.300 5.200l2.400 2.600l4.600-5.800" fill="none" stroke="#4fb04a" stroke-width="1.200"></path></svg>
<div class="t" style="left: 462px; top: 477.5px; font-size: 6.8px; color: rgb(138, 138, 138); transform: scaleX(0.8971); transform-origin: 0px 0px;">Static Perturbation Step.1</div>
<div class="abs" style="left:541px;top:474px;width:10.200px;height:10.800px;background:#f5f5f5;box-sizing:border-box;border:1px solid #dedede;"></div>
<svg class="abs" style="left:542.700px;top:476.700px" width="7" height="6" viewBox="0 0 7 6"><path d="M1.600 1.600h3.800l-1.900 2.400z" fill="#444"></path></svg>
<!-- toolbar body -->
<div class="abs" style="left:233.400px;top:516.200px;width:494px;height:23px;background:#f3f3f3;box-sizing:border-box;border:1px solid #cfcfcf;border-bottom:none;"></div>
<div class="abs" style="left:242.200px;top:517px;width:0.800px;height:21px;background:#dadada;"></div>
<svg class="abs" style="left:234px;top:518px" width="8" height="8" viewBox="0 0 8 8"><path d="M2.200 2.800l1.700 1.700l1.700-1.700" fill="none" stroke="#8a8a8a" stroke-width="0.700"></path></svg>
<!-- tabs -->
<div class="abs" style="left:243.500px;top:505.700px;width:484px;height:10.600px;background:#d6d6d6;border-radius:2px 3px 0 0;"></div>
<div class="abs" style="left:243.200px;top:505.400px;width:29.500px;height:11.100px;background:#f8f8f8;box-sizing:border-box;border-left:0.700px solid #cfcfcf;border-top:0.700px solid #d4d4d4;"></div>
<div class="abs" style="left:272.500px;top:505.400px;width:21.800px;height:11.100px;background:#f5f5f5;border-left:0.700px solid #cfcfcf;border-top:0.700px solid #d4d4d4;box-sizing:border-box;"></div>
<svg class="abs" style="left:243.500px;top:505.700px" width="4" height="4" viewBox="0 0 4 4"><path d="M0 0h3.200L0 3.200z" fill="#3f87c0"></path></svg>
<svg class="abs" style="left:290px;top:506px" width="440" height="11" viewBox="0 0 440 11"><path d="M4.300 0v10.500M40.300 0v10.500M91 0v10.500M128.300 0v10.500M191.200 0v10.500M213.500 0v10.500M264.600 0v10.500M296.500 0v10.500M414.500 0v10.500" stroke="#c4c4c4" stroke-width="0.700"></path></svg>
<div class="t" style="left: 246px; top: 508.3px; font-size: 6.5px; color: rgb(58, 58, 58); transform: scaleX(0.8867); transform-origin: 0px 0px;">Standard</div>
<div class="t" style="left: 276px; top: 508.3px; font-size: 6.5px; color: rgb(58, 58, 58); transform: scaleX(0.8824); transform-origin: 0px 0px;">Setup</div>
<div class="t" style="left: 297.5px; top: 508.3px; font-size: 6.5px; color: rgb(58, 58, 58); transform: scaleX(0.8872); transform-origin: 0px 0px;">Procedures</div>
<div class="t" style="left: 333.7px; top: 508.3px; font-size: 6.5px; color: rgb(58, 58, 58); transform: scaleX(0.9308); transform-origin: 0px 0px;">Initial Conditions</div>
<div class="t" style="left: 384.7px; top: 508.3px; font-size: 6.5px; color: rgb(58, 58, 58); transform: scaleX(0.9015); transform-origin: 0px 0px;">Interactions</div>
<div class="t" style="left: 421.9px; top: 508.3px; font-size: 6.5px; color: rgb(58, 58, 58); transform: scaleX(0.9311); transform-origin: 0px 0px;">Boundary Conditions</div>
<div class="t" style="left: 485px; top: 508.3px; font-size: 6.5px; color: rgb(58, 58, 58); transform: scaleX(0.8466); transform-origin: 0px 0px;">Loads</div>
<div class="t" style="left: 506.7px; top: 508.3px; font-size: 6.5px; color: rgb(58, 58, 58); transform: scaleX(0.8855); transform-origin: 0px 0px;">Predefined Fields</div>
<div class="t" style="left: 557.9px; top: 508.3px; font-size: 6.5px; color: rgb(58, 58, 58); transform: scaleX(0.9375); transform-origin: 0px 0px;">Durability</div>
<div class="t" style="left: 589.6px; top: 508.3px; font-size: 6.5px; color: rgb(58, 58, 58); transform: scaleX(0.8649); transform-origin: 0px 0px;">Si</div>
<div class="t" style="left: 688.1px; top: 508.3px; font-size: 6.5px; color: rgb(58, 58, 58); transform: scaleX(0.8757); transform-origin: 0px 0px;">Tools</div>
<div class="t" style="left: 708.4px; top: 508.3px; font-size: 6.5px; color: rgb(58, 58, 58); transform: scaleX(0.8814); transform-origin: 0px 0px;">Touch</div>
<svg class="abs" style="left:243px;top:517px" width="484" height="21" viewBox="243 517 484 21">
<defs>
  <linearGradient id="rb" x1="0" y1="0" x2="0" y2="1"><stop offset="0" stop-color="#d8251c"></stop><stop offset="0.350" stop-color="#f0a31c"></stop><stop offset="0.550" stop-color="#d6dc2a"></stop><stop offset="0.800" stop-color="#35b34a"></stop><stop offset="1" stop-color="#2a6fb5"></stop></linearGradient>
  <linearGradient id="gearg" x1="0" y1="0" x2="0" y2="1"><stop offset="0" stop-color="#e0402a"></stop><stop offset="0.300" stop-color="#e8b020"></stop><stop offset="0.600" stop-color="#3fb54a"></stop><stop offset="1" stop-color="#2a78c0"></stop></linearGradient>
  <radialGradient id="sph" cx="35%" cy="30%" r="75%"><stop offset="0" stop-color="#e2e2e2"></stop><stop offset="0.500" stop-color="#8c8c8c"></stop><stop offset="1" stop-color="#4a4a4a"></stop></radialGradient>
  <linearGradient id="und" x1="0" y1="0" x2="0.600" y2="1"><stop offset="0" stop-color="#6db3de"></stop><stop offset="1" stop-color="#3583b6"></stop></linearGradient>
</defs>
<!-- separators -->
<path d="M265.750 519.500v16.500M293.750 519.500v16.500M368 519.500v16.500M398 519.500v16.500M427 518v20M540 519.500v16.500M569.200 519.500v16.500M590.600 519.500v16.500M634.700 519.500v16.500M655.600 519.500v16.500" stroke="#d9d9d9" stroke-width="0.700" fill="none"></path>
<!-- dropdown carets -->
<g fill="#8a8a8a"><path d="M286.500 527h3l-1.500 1.800zM316 527h3l-1.500 1.800zM343 527h3l-1.500 1.800zM391 527h3l-1.500 1.800zM419.500 527h3l-1.500 1.800zM506.800 527h3l-1.500 1.800zM533.900 527h3l-1.500 1.800zM563.100 527h3l-1.500 1.800z"></path></g>
<!-- 1 fit all -->
<path d="M248.500 524h2.500M248.500 524v6.500h2.500M260 524h-2.500M260 524v6.500h-2.500" fill="none" stroke="#c9c9c9" stroke-width="1.200"></path>
<circle cx="254.100" cy="526.900" r="4.100" fill="#fff" stroke="#111" stroke-width="1.200"></circle>
<circle cx="254.100" cy="526.900" r="1.300" fill="#1d5b8c"></circle>
<path d="M257.300 530.200l3.200 3.200" stroke="#111" stroke-width="1.700" stroke-linecap="round"></path>
<!-- 2 undo -->
<path d="M268.800 522.200L276.800 522.400C281.200 522.600 283.300 525.400 283.100 528.600C282.900 531.600 280.600 534 277.700 534.700L276.300 532C278.400 531.300 279.500 530 279.500 528.300C279.500 526.700 278.300 525.800 276.400 525.800L274.600 525.800L273.400 529.200Z" fill="url(#und)" stroke="#2d7db3" stroke-width="0.300" stroke-linejoin="round"></path>
<!-- 3 grey cube -->
<path d="M298.200 525.400L302.900 522.200L307 523.300V527L310.700 528V531.600L306.500 534.700L298.200 531.600Z" fill="#e2e2e2" stroke="#858585" stroke-width="0.600" stroke-linejoin="round"></path>
<path d="M298.200 525.400L302.400 526.600L307 523.300M302.400 526.600V529.600L306.500 530.800L310.700 528M306.500 530.800V534.700M302.400 529.600L298.200 531.600" fill="none" stroke="#9a9a9a" stroke-width="0.500"></path>
<path d="M302.400 526.600L307 523.300V527L302.400 529.600Z" fill="#f4f4f4"></path>
<!-- 4 blue cube -->
<path d="M326 525.600l4-2.600l5-0.600l3.400 2.200v6.200l-5.800 3.400l-6.600-3z" fill="#e6eef5" stroke="#2f7fb6" stroke-width="1.500" stroke-linejoin="round"></path>
<path d="M330 523l2.200 1.800v5.400l6 -1M332.200 530.200l-6-1" fill="none" stroke="#9ab4c8" stroke-width="0.500"></path>
<path d="M335 521.800v3.400h-1.600l2.600 2.800l2.600-2.800h-1.600v-3.400z" fill="#2f7fb6"></path>
<circle cx="335" cy="528.400" r="2.600" fill="#cfdbe6" stroke="#7a9ab4" stroke-width="0.400"></circle>
<!-- 5 rainbow cube -->
<path d="M352.200 525l3.200-2.800l5 -0.400l2.200 2.200v2.600l1.600 1v3.600l-5.400 2.600l-6.600-3.200z" fill="url(#rb)" stroke="#7a5a2a" stroke-width="0.300" stroke-linejoin="round"></path>
<path d="M357.600 526.800l4.800-1.800v2.400l1.800 1.200v3.600l-5.400 2.400v-5z" fill="#2fae4a" opacity="0.750"></path>
<path d="M352.200 525l3.200-2.800l5-0.400l2.200 2.200l-5 2.800z" fill="#dc2a1e" opacity="0.850"></path>
<!-- 6 table -->
<rect x="372.600" y="521.700" width="14" height="12.600" fill="#f4f7fa" stroke="#7f9ab2" stroke-width="0.600"></rect>
<rect x="372.600" y="521.700" width="14" height="2.400" fill="#5486b0"></rect>
<rect x="374" y="525.300" width="3.300" height="7.800" fill="#7ea6c6"></rect><rect x="378.300" y="525.300" width="7" height="7.800" fill="#7ea6c6"></rect>
<!-- 7 cycle -->
<circle cx="408.500" cy="528" r="4.700" fill="none" stroke="#4a8cba" stroke-width="3.300" stroke-dasharray="5.780 1.600" transform="rotate(-30 408.500 528)"></circle>
<path d="M403.600 521.400l4.600-.6l-1.600 4.200zM413.400 534.600l-4.600 .6l1.600-4.200z" fill="#3c7eae"></path>
<!-- 8 blue L -->
<path d="M435.600 521.800l6.400-.6l1.200 8.400l3.800 2.200l-9.600 3.400l-6-2.800l5-2.400z" fill="#3b82b4" stroke="#2a6a9a" stroke-width="0.400" stroke-linejoin="round"></path>
<path d="M437.800 523.400h1.600M437.800 525.400h1.600M440.400 523.200h1M438 528h3M434 532l5 1.600" stroke="#8fc0e0" stroke-width="0.600" fill="none"></path>
<!-- 9 -->
<path d="M454.600 521.600l5-.6l.8 6l3 1.800l-6.400 3.400l-5.600-3l4-2z" fill="#3b82b4" stroke="#2a6a9a" stroke-width="0.400" stroke-linejoin="round"></path>
<path d="M456 523.400h1.400M456 525.200h1.400M458.400 523.200h1" stroke="#8fc0e0" stroke-width="0.600" fill="none"></path>
<path d="M458 529.600l4.600-1.400l3 2.200l-1 2.600l-5 .8z" fill="#f4f4f4" stroke="#9a9a9a" stroke-width="0.500"></path>
<!-- 10 -->
<path d="M471.400 522.200l2.600 2.400M473.600 528l-1.800 2.800M474.600 523.200l-3 10" stroke="#222" stroke-width="0.700" fill="none"></path>
<path d="M472.600 523.200l1.800 1.800l-2.200.2z" fill="#111"></path>
<ellipse cx="479.800" cy="527.400" rx="4" ry="3" fill="#4a90c2" stroke="#2a6a9a" stroke-width="0.500"></ellipse>
<path d="M477.800 527.400h4" stroke="#d6e8f4" stroke-width="0.800"></path>
<path d="M476.600 523.200c2-1.400 4.400-1 5.400 1" fill="none" stroke="#8a8a8a" stroke-width="0.700"></path>
<path d="M471 531.800l3.600-.6l1.800 1.800l-3.600 1z" fill="#3b82b4"></path>
<!-- 11 -->
<path d="M489.600 524l3.600-1.800l4.400 1.400v6.400l-4 1.600l-4-1.800z" fill="#e4e7ea" stroke="#9a9a9a" stroke-width="0.500" stroke-linejoin="round"></path>
<path d="M494.200 520.600h2.400v4.800h-2.400z" fill="#3b82b4"></path><path d="M492.400 526.200l3 -1.200l2.600 1.200l-2.800 1.400z" fill="#5a9ccc"></path>
<path d="M498.800 528.400h2.600v2.200h2.200v2.600h-2.200v2.200h-2.600v-2.200h-2.200v-2.600h2.200z" fill="#2f7fb6"></path>
<!-- 12 sphere -->
<ellipse cx="522.800" cy="527.800" rx="7.400" ry="5.800" fill="url(#sph)" transform="rotate(12 522.800 527.800)"></ellipse>
<path d="M517 525.400c3 -1 6 1 7.400 4.600c1.600 2 3.600 2.200 5.200 .6" fill="none" stroke="#d8d8d8" stroke-width="0.700" opacity="0.800"></path>
<!-- 13 grid -->
<path d="M545.800 521.800v12h11.400" fill="none" stroke="#222" stroke-width="0.700"></path>
<path d="M545.800 520.800l-1.200 1.800h2.400zM558.400 533.800l-1.800-1.200v2.400z" fill="#111"></path>
<rect x="547.200" y="524.200" width="8.400" height="7.800" fill="#6e8ea8" stroke="#46627a" stroke-width="0.400"></rect>
<path d="M547.200 528.600h8.400M551.600 524.200v7.800" stroke="#e6eef4" stroke-width="0.500"></path>
<path d="M552.400 521.400h4.400v4.400h-4.400z" fill="#d8dde2" stroke="#8a8a8a" stroke-width="0.400"></path>
<path d="M553.400 526.800l4.600-5.600" stroke="#333" stroke-width="0.900"></path>
<!-- 14 gear -->
<path d="M579 521.200l2 .2l.4 1.600l1.400.6l1.400-.8l1.400 1.400l-.8 1.400l.6 1.400l1.600.4v2l-1.600.4l-.6 1.400l.8 1.400l-1.400 1.400l-1.400-.8l-1.400.6l-.4 1.600h-2l-.4-1.600l-1.400-.6l-1.400.8l-1.400-1.400l.8-1.400l-.6-1.400l-1.600-.4v-2l1.600-.4l.6-1.400l-.8-1.400l1.400-1.400l1.400.8l1.400-.6z" fill="url(#gearg)"></path>
<circle cx="580" cy="528" r="2.300" fill="#f3f3f3"></circle>
<rect x="581.600" y="527.600" width="5.600" height="7" fill="#f6f6f6" stroke="#8a8a8a" stroke-width="0.500"></rect>
<path d="M582.600 529.400h3.600M582.600 531h3.600M582.600 532.600h3.600" stroke="#8a8a8a" stroke-width="0.600"></path>
<!-- 15 selected -->
<rect x="593.900" y="519.500" width="16.200" height="16.600" rx="1" fill="#eef6fd" stroke="#8cc0ea" stroke-width="0.700"></rect>
<path d="M596 521.600h5.600l3.400 3.400v9.200h-9z" fill="#fbfbfb" stroke="#8a8a8a" stroke-width="0.500" stroke-linejoin="round"></path>
<path d="M601.600 521.600v3.400h3.400" fill="none" stroke="#9a9a9a" stroke-width="0.400"></path>
<circle cx="605.600" cy="526.600" r="2.200" fill="#3f8cc0" stroke="#2a6a9a" stroke-width="0.300"></circle>
<path d="M601.800 534.400c0-3 1.600-4.600 3.800-4.600s3.800 1.600 3.800 4.600z" fill="#3f8cc0" stroke="#2a6a9a" stroke-width="0.300"></path>
<!-- 16 edit doc -->
<path d="M617.600 521.800h7.400l4.400 4.200v8.400h-11.800z" fill="#f4f4f4" stroke="#6a6a6a" stroke-width="0.600" stroke-linejoin="round"></path>
<path d="M619.200 524.200h4.400M619.200 526h3.400M619.200 527.800h3.400M619.200 529.600h2.400" stroke="#9a9a9a" stroke-width="0.600"></path>
<path d="M621.800 533.800l.8-2.600l6.200-6.400l1.800 1.800l-6.200 6.400z" fill="#e8e8e8" stroke="#333" stroke-width="0.600" stroke-linejoin="round"></path>
<path d="M628.200 525.200l1.900 1.900" stroke="#222" stroke-width="1.200"></path>
<!-- 17 window globe -->
<rect x="638.300" y="521.400" width="13.400" height="13" fill="#f7f7f7" stroke="#5a6e80" stroke-width="0.600"></rect>
<rect x="638.300" y="521.400" width="13.400" height="2.400" fill="#4f86b2"></rect>
<circle cx="645.400" cy="529.200" r="3.900" fill="#3f8cc0" stroke="#2a6a9a" stroke-width="0.400"></circle>
<path d="M642.600 527.400c2 1 3.600 2.600 4.200 5M644.400 525.600c2.400.6 4 2.200 4.800 4.400" fill="none" stroke="#1f5f8f" stroke-width="0.500"></path>
<path d="M641.400 526l2.600-.8l-.6 2.600z" fill="#222"></path>
<!-- more -->
<path d="M674.300 525.800l4 2.800l-4 2.800z" fill="#7a7a7a"></path>
</svg>

<!--ICONS-->
<!-- tooltip -->
<div class="abs" style="left:594.400px;top:475.300px;width:90.300px;height:41px;background:#e8e8e8;box-sizing:border-box;border:1px solid #c9c9c9;border-radius:1.500px;"></div>
<div class="abs" style="left:595.400px;top:476.300px;width:88.300px;height:9.600px;background:#d7d7d7;"></div>
<div class="abs" style="left:595.400px;top:506.700px;width:88.300px;height:8.600px;background:#f6f6f6;"></div>
<div class="t" style="left: 597.2px; top: 477.6px; font-size: 6.2px; color: rgb(62, 62, 62); font-weight: bold; transform: scaleX(0.914); transform-origin: 0px 0px;">User Subroutine</div>
<div class="t" style="left: 597.2px; top: 489.2px; font-size: 6.3px; color: rgb(122, 122, 122); transform: scaleX(0.9343); transform-origin: 0px 0px;">Links a user subroutine to the</div>
<div class="t" style="left: 597.2px; top: 496.5px; font-size: 6.3px; color: rgb(122, 122, 122); transform: scaleX(0.903); transform-origin: 0px 0px;">current analysis case.</div>
<svg class="abs" style="left:597px;top:507px" width="9" height="9" viewBox="0 0 9 9"><circle cx="4.200" cy="4.400" r="3.700" fill="#5fb3e0" stroke="#3a93c6" stroke-width="0.500"></circle><text x="4.200" y="6.500" font-size="5.600" fill="#fff" text-anchor="middle" font-family="Liberation Sans, sans-serif">?</text></svg>
<div class="t" style="left: 606.9px; top: 507.9px; font-size: 6.3px; color: rgb(106, 106, 106); transform: scaleX(0.8952); transform-origin: 0px 0px;">Press F1 for more help.</div>
<!-- arrows -->
<svg class="abs" style="left:0;top:0" width="960" height="540" viewBox="0 0 960 540">
  <defs><filter id="ash" x="-5%" y="-5%" width="110%" height="115%"><feDropShadow dx="0.600" dy="1.200" stdDeviation="0.900" flood-color="#000" flood-opacity="0.220"></feDropShadow></filter></defs>
  <g fill="none" stroke="#0e5a8b" stroke-linecap="round" stroke-linejoin="round" filter="url(#ash)">
    <path d="M357.500 332.500L454.500 114.500" stroke-width="4.500"></path>
    <path d="M459.800 104.300L448.300 115L460.300 119.700Z" fill="#0e5a8b" stroke-width="0.800"></path>
    <path d="M491.100 106.900L562 158.600" stroke-width="4.900"></path>
    <path d="M571.500 165.800L556.800 162.800L565 152.500Z" fill="#0e5a8b" stroke-width="0.800"></path>
    <path d="M587.700 497L373 420.600" stroke-width="4.700"></path>
    <path d="M359.200 417.700L374.300 415.600L369.700 428.400Z" fill="#0e5a8b" stroke-width="0.800"></path>
  </g>
</svg>
<!-- triad and cursor -->
<svg class="abs" style="left:912px;top:455px" width="48" height="50" viewBox="0 0 48 50">
  <g fill="none" stroke="#d6d6d6" stroke-width="0.700">
  <ellipse cx="14" cy="15" rx="11.500" ry="8" transform="rotate(-48 14 15)"></ellipse>
  <ellipse cx="17.500" cy="18" rx="5.500" ry="4.600" transform="rotate(-30 17.500 18)"></ellipse>
  <path d="M13 27V16.300M14 14L25 7M14 16L23.500 23.600"></path>
  <circle cx="13" cy="15" r="1.400" stroke="#c4c4c4"></circle>
  </g>
  <path d="M12.400 26.800h1.200v1.200h-1.200zM23.400 23.400h1.200v1.200h-1.200zM24.800 6.300h1.200v1.200h-1.200z" fill="#8a8a8a"></path>
  <path d="M47 39L39.800 45.300L43.600 45L43.700 48.600Z" fill="#1c1c1c"></path>
</svg>

<!--TOOLBAR-->
<div id="bottomline" class="abs"></div>


</body></html>
